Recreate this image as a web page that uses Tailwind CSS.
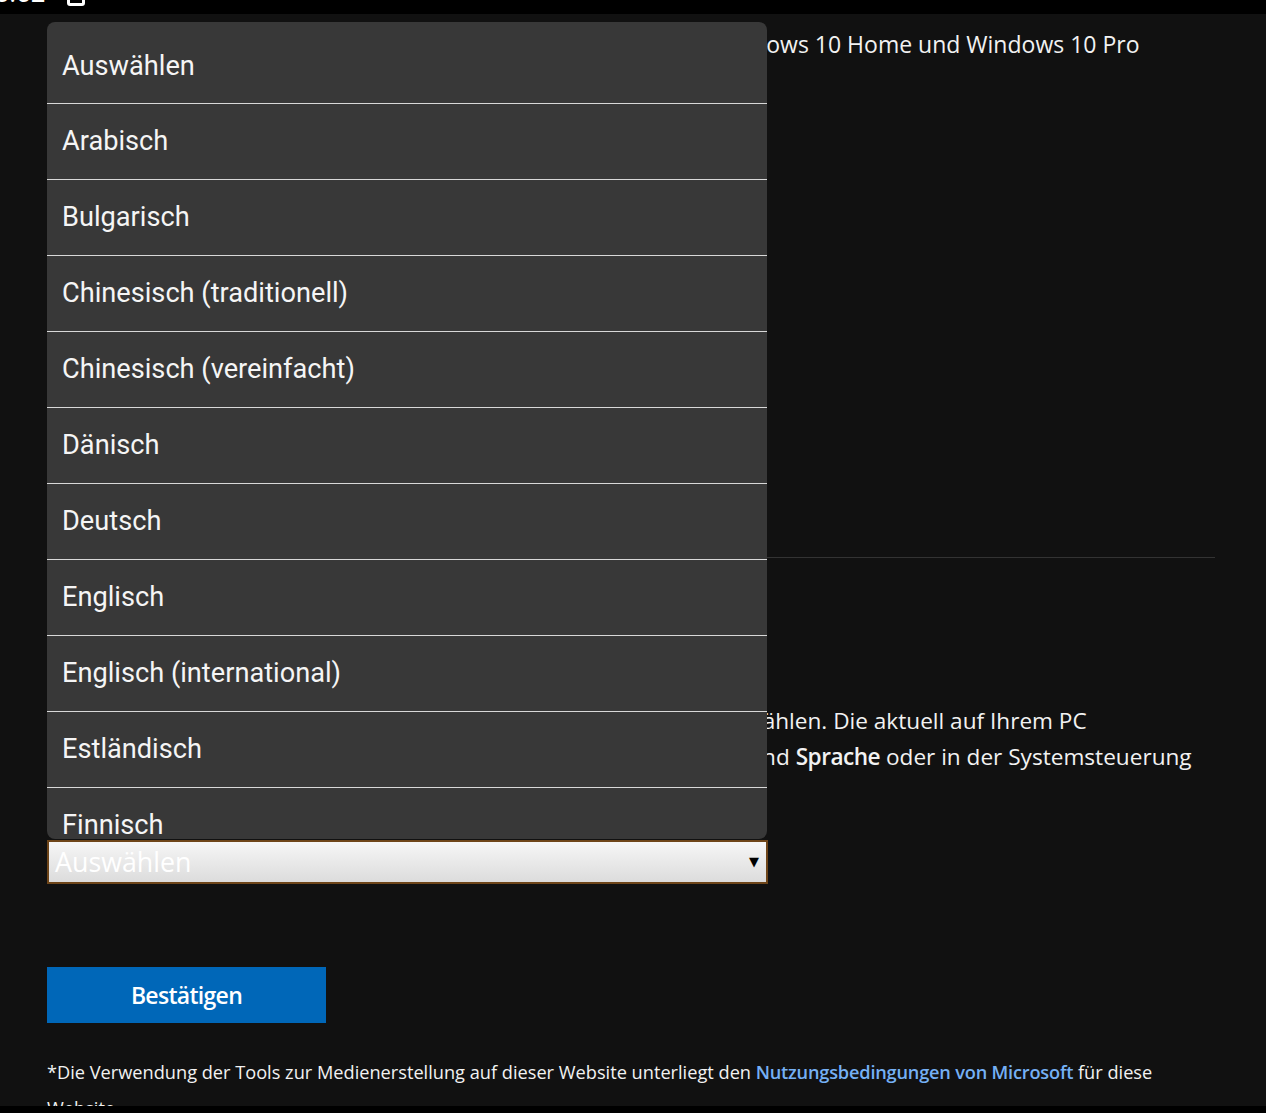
<!DOCTYPE html>
<html lang="de">
<head>
  <meta charset="UTF-8" />
  <title>Windows 10 herunterladen</title>
  <script src="https://cdn.jsdelivr.net/npm/@tailwindcss/browser@4"></script>
</head>
<body class="bg-[#111111] h-[1113px] w-[1266px] overflow-hidden relative font-['Open_Sans',sans-serif] text-[#f2f2f2]">

  <!-- status bar, cut off at the top of the capture -->
  <div class="h-[14px] bg-black overflow-hidden relative">
    <span class="absolute left-[-5px] bottom-[6px] text-[26px] leading-[30px] font-['Roboto',sans-serif] text-white">0:52</span>
    <span class="absolute left-[67px] bottom-[8px] w-[18px] h-[18px] border-[3px] border-white rounded-[3px]"></span>
  </div>

  <main class="pl-[47px] pr-[51px]">
    <p class="pl-[664px] pt-[12px] text-[23px] leading-[36px] whitespace-nowrap overflow-hidden">Windows 10 Home und Windows 10 Pro</p>

    <div class="mt-[495px] h-px bg-[#333333]"></div>

    <div class="mt-[145px] text-[22.6px] leading-[36px] whitespace-nowrap">
      <p class="pl-[661px]">auswählen. Die aktuell auf Ihrem PC</p>
      <p class="pl-[656px]">Zeit und <b class="font-semibold tracking-[-0.5px]">Sprache</b> oder in der Systemsteuerung</p>
    </div>

    <div class="mt-[65px] w-[721px] h-[44px] border-2 border-[#6e4519] bg-linear-to-b from-[#f6f6f6] to-[#dcdcdc] flex items-center justify-between pl-[6px] pr-[7px]">
      <span class="text-[26.8px] text-white">Auswählen</span>
      <span class="text-[13px] text-black leading-none font-['DejaVu_Sans',sans-serif] -mt-[2px]">▼</span>
    </div>

    <button class="mt-[83px] block w-[279px] h-[56px] bg-[#0067b8] text-white text-[23px] font-semibold tracking-[-0.7px]">Bestätigen</button>

    <p class="mt-[31px] text-[18.2px] leading-[36px]">*Die Verwendung der Tools zur Medienerstellung auf dieser Website unterliegt den <a class="text-[#75b0f5] font-semibold tracking-[-0.2px]">Nutzungsbedingungen von Microsoft</a> für diese Website.</p>
  </main>

  <!-- open native select list -->
  <ul class="absolute left-[47px] top-[22px] w-[720px] h-[817px] overflow-hidden rounded-[8px] bg-[#383838] font-['Roboto',sans-serif] text-[27.2px] text-[#f5f5f5] divide-y divide-[#d8d8d8]">
    <li class="h-[82px] pl-[15px] pt-[7px] flex items-center">Auswählen</li>
    <li class="h-[76px] pl-[15px] flex items-center">Arabisch</li>
    <li class="h-[76px] pl-[15px] flex items-center">Bulgarisch</li>
    <li class="h-[76px] pl-[15px] flex items-center">Chinesisch (traditionell)</li>
    <li class="h-[76px] pl-[15px] flex items-center">Chinesisch (vereinfacht)</li>
    <li class="h-[76px] pl-[15px] flex items-center">Dänisch</li>
    <li class="h-[76px] pl-[15px] flex items-center">Deutsch</li>
    <li class="h-[76px] pl-[15px] flex items-center">Englisch</li>
    <li class="h-[76px] pl-[15px] flex items-center">Englisch (international)</li>
    <li class="h-[76px] pl-[15px] flex items-center">Estländisch</li>
    <li class="h-[76px] pl-[15px] pb-[2px] flex items-center">Finnisch</li>
  </ul>

  <div class="absolute bottom-0 left-0 right-0 h-[7px] bg-black"></div>
</body>
</html>
